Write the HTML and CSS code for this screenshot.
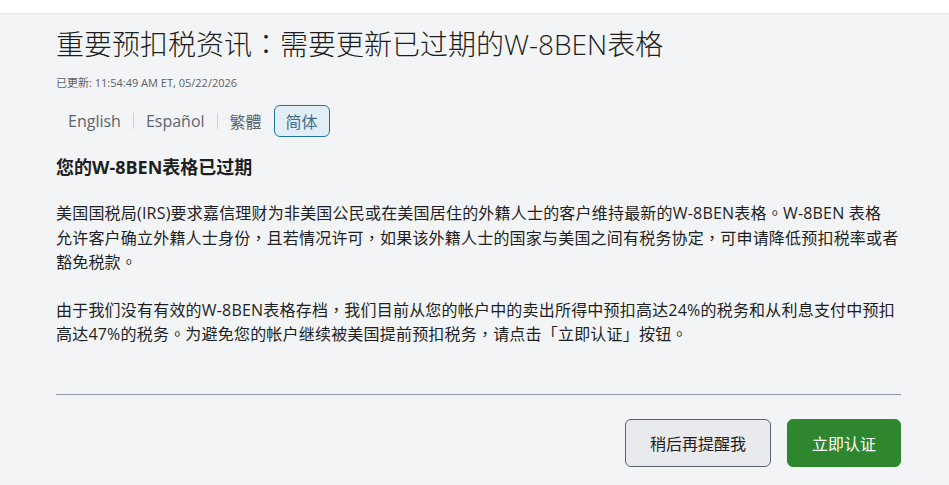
FILE: index.html
```html
<!DOCTYPE html>
<html lang="zh-CN">
<head>
  <meta charset="UTF-8" />
  <meta name="viewport" content="width=device-width, initial-scale=1.0"/>
  <title>重要预扣税资讯</title>
  <link rel="stylesheet" href="styles.css">
</head>
<body>

<div class="topstrip"></div>

<div class="notice">
  <h1 class="notice-title">重要预扣税资讯<span class="pn" lang="zh-TW">：</span>需要更新已过期的W-8BEN表格</h1>
  <div class="updated">已更新: 11:54:49 AM ET, 05/22/2026</div>

  <div class="lang-tabs">
    <button class="lang">English</button>
    <span class="sep"></span>
    <button class="lang">Español</button>
    <span class="sep"></span>
    <button class="lang">繁體</button>
    <button class="lang active">简体</button>
  </div>

  <h2 class="notice-heading">您的W-8BEN表格已过期</h2>

  <p>美国国税局(IRS)要求嘉信理财为非美国公民或在美国居住的外籍人士的客户维持最新的W-8BEN表格<span class="pn" lang="zh-TW">。</span>W-8BEN 表格<br>允许客户确立外籍人士身份<span class="pn" lang="zh-TW">，</span>且若情况许可<span class="pn" lang="zh-TW">，</span>如果该外籍人士的国家与美国之间有税务协定<span class="pn" lang="zh-TW">，</span>可申请降低预扣税率或者<br>豁免税款<span class="pn" lang="zh-TW">。</span></p>

  <p>由于我们没有有效的W-8BEN表格存档<span class="pn" lang="zh-TW">，</span>我们目前从您的帐户中的卖出所得中预扣高达24%的税务和从利息支付中预扣<br>高达47%的税务<span class="pn" lang="zh-TW">。</span>为避免您的帐户继续被美国提前预扣税务<span class="pn" lang="zh-TW">，</span>请点击「立即认证」按钮<span class="pn" lang="zh-TW">。</span></p>

  <hr class="divider">

  <div class="actions">
    <button class="btn btn-secondary">稍后再提醒我</button>
    <button class="btn btn-primary">立即认证</button>
  </div>
</div>

</body>
</html>
```

FILE: styles.css
```css
:root {
  --bg: #f3f4f6;
  --text: #1d1f22;
  --muted: #5b6068;
  --tab: #5b6471;
  --blue: #1f74a6;
  --green: #2e862f;
}

* { box-sizing: border-box; }

body {
  margin: 0;
  background: var(--bg);
  color: var(--text);
  font-family: "Open Sans", "Noto Sans CJK SC", sans-serif;
}

/* full-width punctuation, centred in its cell */
.pn {
  font-family: "Noto Sans CJK TC", sans-serif;
  line-height: 1;
}

.topstrip {
  height: 14px;
  background: white;
  border-bottom: 1px solid #e6e8eb;
}

.notice {
  padding: 12px 48px 0 56px;
}

.notice-title {
  margin: 0;
  font-size: 28px;
  line-height: 36px;
  font-weight: 300;
  color: #1b1d20;
}

.updated {
  margin-top: 13px;
  font-size: 11px;
  line-height: 16px;
  color: var(--muted);
}

.lang-tabs {
  display: flex;
  align-items: center;
  margin-top: 14px;
  height: 32px;
}

.lang {
  height: 32px;
  padding: 0 11px;
  background: none;
  border: 1px solid transparent;
  border-radius: 6px;
  font-family: inherit;
  font-size: 16px;
  color: var(--tab);
  cursor: pointer;
}

.lang.active {
  background: #e1eef6;
  border-color: var(--blue);
  color: #3f6f8f;
}

.sep {
  width: 1px;
  height: 16px;
  background: #cdd1d6;
}

.notice-heading {
  margin: 18px 0 0;
  font-size: 18px;
  line-height: 24px;
  font-weight: 700;
}

.notice p {
  margin: 22px 0 0;
  font-size: 16px;
  line-height: 24.5px;
  letter-spacing: 0.2px;
}

.notice p + p {
  margin-top: 23px;
}

.divider {
  margin: 47px 0 0;
  border: none;
  border-top: 1px solid #8c97a3;
}

.actions {
  display: flex;
  justify-content: flex-end;
  gap: 16px;
  margin-top: 24px;
}

.btn {
  height: 48px;
  padding: 0 24px;
  border-radius: 6px;
  font-family: inherit;
  font-size: 16px;
  cursor: pointer;
}

.btn-secondary {
  background: #e9eaee;
  border: 1px solid #5b6270;
  color: #1d1f22;
}

.btn-primary {
  background: var(--green);
  border: 1px solid var(--green);
  color: white;
}
```
